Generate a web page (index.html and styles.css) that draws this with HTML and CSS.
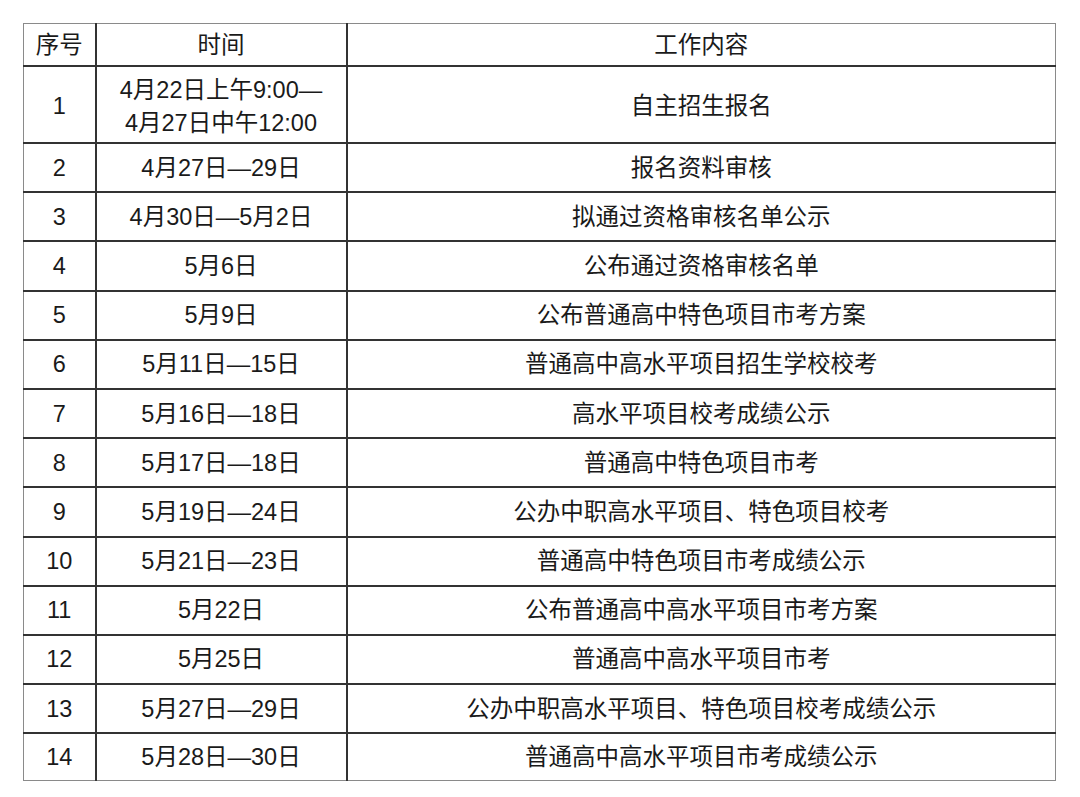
FILE: index.html
```html
<!DOCTYPE html>
<html lang="zh">
<head>
<meta charset="utf-8">
<link rel="stylesheet" href="styles.css">
</head>
<body>
<table class="schedule">
  <colgroup>
    <col class="c-no">
    <col class="c-time">
    <col class="c-work">
  </colgroup>
  <tr class="head"><td>序号</td><td>时间</td><td>工作内容</td></tr>
  <tr class="tall"><td>1</td><td>4月22日上午9:00—<br>4月27日中午12:00</td><td>自主招生报名</td></tr>
  <tr><td>2</td><td>4月27日—29日</td><td>报名资料审核</td></tr>
  <tr><td>3</td><td>4月30日—5月2日</td><td>拟通过资格审核名单公示</td></tr>
  <tr><td>4</td><td>5月6日</td><td>公布通过资格审核名单</td></tr>
  <tr><td>5</td><td>5月9日</td><td>公布普通高中特色项目市考方案</td></tr>
  <tr><td>6</td><td>5月11日—15日</td><td>普通高中高水平项目招生学校校考</td></tr>
  <tr><td>7</td><td>5月16日—18日</td><td>高水平项目校考成绩公示</td></tr>
  <tr><td>8</td><td>5月17日—18日</td><td>普通高中特色项目市考</td></tr>
  <tr><td>9</td><td>5月19日—24日</td><td>公办中职高水平项目、特色项目校考</td></tr>
  <tr><td>10</td><td>5月21日—23日</td><td>普通高中特色项目市考成绩公示</td></tr>
  <tr><td>11</td><td>5月22日</td><td>公布普通高中高水平项目市考方案</td></tr>
  <tr><td>12</td><td>5月25日</td><td>普通高中高水平项目市考</td></tr>
  <tr><td>13</td><td>5月27日—29日</td><td>公办中职高水平项目、特色项目校考成绩公示</td></tr>
  <tr class="last"><td>14</td><td>5月28日—30日</td><td>普通高中高水平项目市考成绩公示</td></tr>
</table>
</body>
</html>
```

FILE: styles.css
```css
html, body {
  margin: 0;
  padding: 0;
  background: #ffffff;
}
body {
  padding: 23px 0 0 23px;
  font-family: "Liberation Sans", "Noto Sans CJK SC", sans-serif;
  color: #1a1a1a;
}
.schedule {
  border-collapse: collapse;
  width: 1033px;
  table-layout: fixed;
  border: 1px solid #8a8a8a;
}
.c-no { width: 72px; }
.c-time { width: 251px; }
.c-work { width: auto; }
.schedule td {
  padding: 1px 0 0;
  text-align: center;
  vertical-align: middle;
  font-size: 23.5px;
  line-height: 33px;
  height: 46.2px;
  border: none;
}
.schedule td + td {
  border-left: 2px solid #333333;
}
.schedule tr + tr td {
  border-top: 2px solid #333333;
}
.schedule .head td {
  padding-top: 2px;
  height: 39px;
}
.schedule .tall td {
  padding-top: 4px;
  height: 71px;
}
.schedule .last td {
  height: 45px;
}
```
